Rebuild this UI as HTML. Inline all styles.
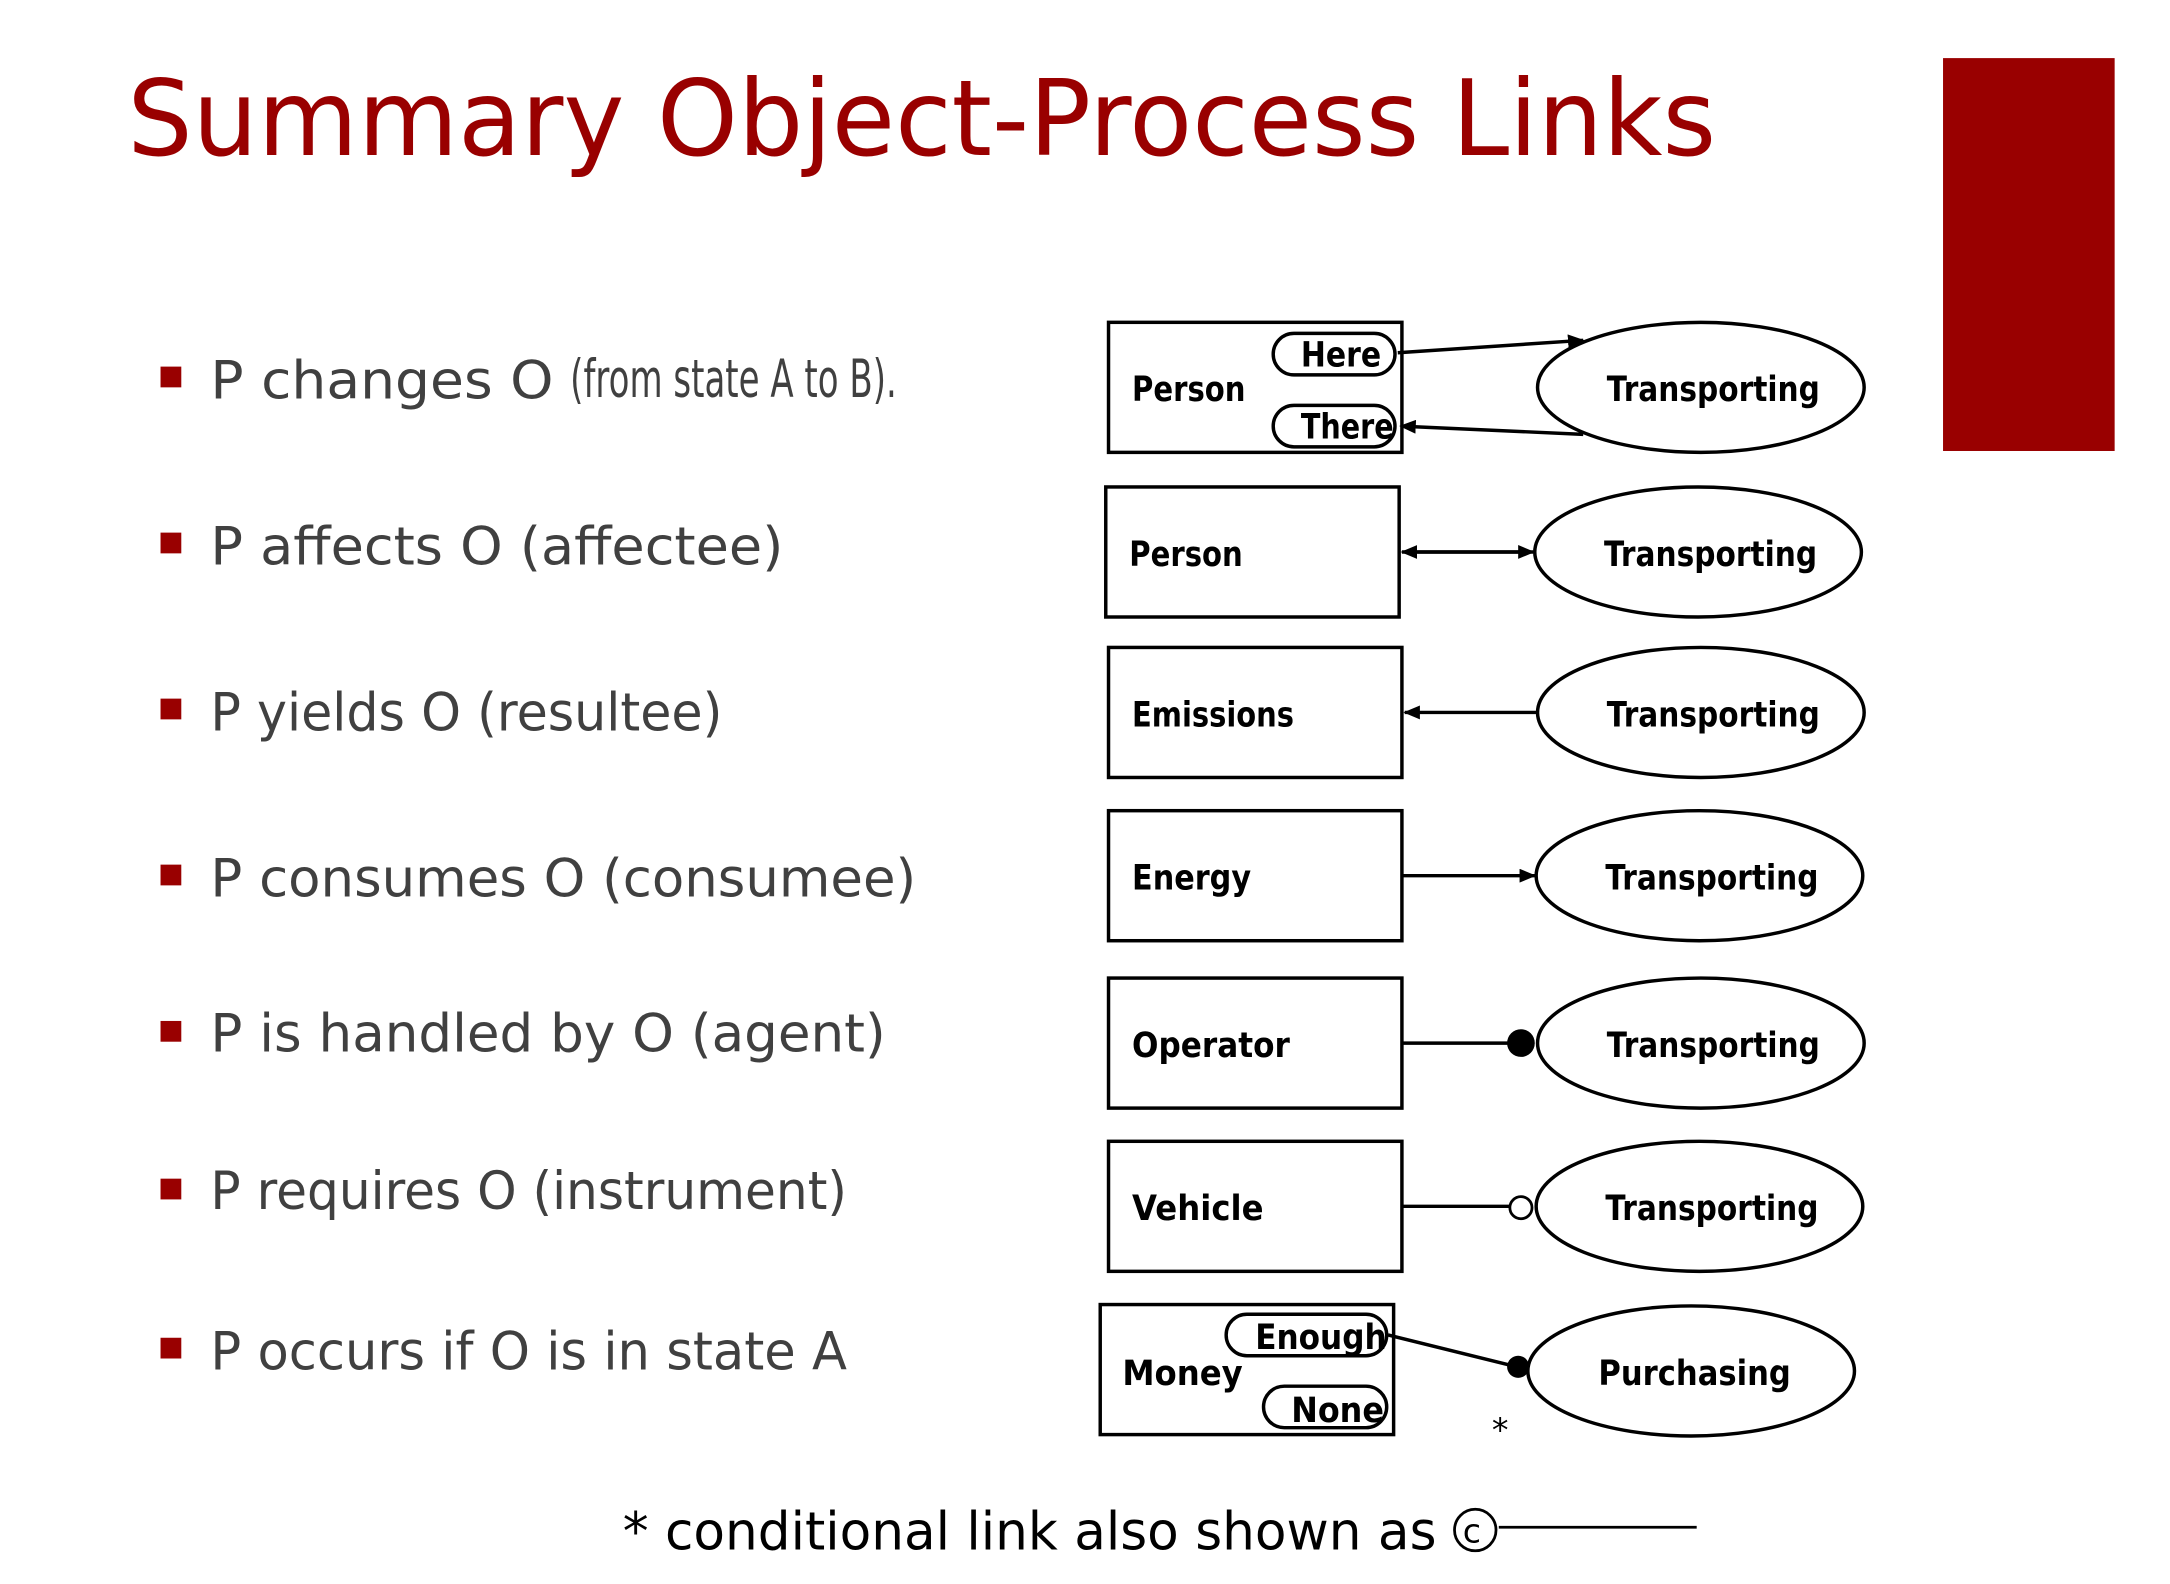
<!DOCTYPE html>
<html><head><meta charset="utf-8"><style>
html,body{margin:0;padding:0;background:#fff;}
svg{display:block;}
.b{font-family:"DejaVu Sans","Liberation Sans",sans-serif;font-weight:bold;font-size:25px;fill:#000;}
.t{font-family:"DejaVu Sans","Liberation Sans",sans-serif;font-size:38px;fill:#404040;}
</style></head><body>
<svg width="2170" height="1584" viewBox="0 0 1568 1145" preserveAspectRatio="none" xmlns="http://www.w3.org/2000/svg">
<defs>
<marker id="a" markerWidth="12" markerHeight="10" refX="11" refY="5" orient="auto" markerUnits="userSpaceOnUse"><path d="M0,0 L12,5 L0,10 z" fill="#000"/></marker>
</defs>
<rect x="1404" y="42" width="124" height="284" fill="#990000"/>
<text x="92" y="112" font-family="'DejaVu Sans','Liberation Sans',sans-serif" font-size="76" fill="#990000" textLength="1148" lengthAdjust="spacingAndGlyphs">Summary Object-Process Links</text>

<g fill="#990000">
<rect x="116" y="265" width="15" height="15"/>
<rect x="116" y="385" width="15" height="15"/>
<rect x="116" y="505" width="15" height="15"/>
<rect x="116" y="625" width="15" height="15"/>
<rect x="116" y="738" width="15" height="15"/>
<rect x="116" y="852" width="15" height="15"/>
<rect x="116" y="967" width="15" height="15"/>
</g>
<text class="t" x="152" y="288" textLength="248" lengthAdjust="spacingAndGlyphs">P changes O</text>
<text class="t" x="412" y="287" font-size="26" textLength="236" lengthAdjust="spacingAndGlyphs">(from state A to B).</text>
<text class="t" x="152" y="408" textLength="414" lengthAdjust="spacingAndGlyphs">P affects O (affectee)</text>
<text class="t" x="152" y="528" textLength="370" lengthAdjust="spacingAndGlyphs">P yields O (resultee)</text>
<text class="t" x="152" y="648" textLength="510" lengthAdjust="spacingAndGlyphs">P consumes O (consumee)</text>
<text class="t" x="152" y="760" textLength="488" lengthAdjust="spacingAndGlyphs">P is handled by O (agent)</text>
<text class="t" x="152" y="874" textLength="460" lengthAdjust="spacingAndGlyphs">P requires O (instrument)</text>
<text class="t" x="152" y="990" textLength="460" lengthAdjust="spacingAndGlyphs">P occurs if O is in state A</text>

<g fill="none" stroke="#000" stroke-width="2.5">
<rect x="801" y="233" width="212" height="94"/>
<rect x="920" y="241" width="88" height="30" rx="15"/>
<rect x="920" y="293" width="88" height="30" rx="15"/>
<ellipse cx="1229" cy="280" rx="118" ry="47"/>
<line x1="1010" y1="255" x2="1144" y2="246" marker-end="url(#a)"/>
<line x1="1144" y1="314" x2="1012" y2="308" marker-end="url(#a)"/>

<rect x="799" y="352" width="212" height="94"/>
<ellipse cx="1227" cy="399" rx="118" ry="47"/>
<line x1="1024" y1="399" x2="1108" y2="399" marker-end="url(#a)"/>
<line x1="1100" y1="399" x2="1013" y2="399" marker-end="url(#a)"/>

<rect x="801" y="468" width="212" height="94"/>
<ellipse cx="1229" cy="515" rx="118" ry="47"/>
<line x1="1110" y1="515" x2="1015" y2="515" marker-end="url(#a)"/>

<rect x="801" y="586" width="212" height="94"/>
<ellipse cx="1228" cy="633" rx="118" ry="47"/>
<line x1="1013" y1="633" x2="1109" y2="633" marker-end="url(#a)"/>

<rect x="801" y="707" width="212" height="94"/>
<ellipse cx="1229" cy="754" rx="118" ry="47"/>
<line x1="1013" y1="754" x2="1092" y2="754"/>

<rect x="801" y="825" width="212" height="94"/>
<ellipse cx="1228" cy="872" rx="118" ry="47"/>
<line x1="1013" y1="872" x2="1091" y2="872"/>
<circle cx="1099" cy="873" r="8" fill="#fff" stroke-width="2"/>

<rect x="795" y="943" width="212" height="94"/>
<rect x="886" y="950" width="116" height="30" rx="15"/>
<rect x="913" y="1002" width="89" height="30" rx="15"/>
<ellipse cx="1222" cy="991" rx="118" ry="47"/>
<line x1="1003" y1="965" x2="1096" y2="988"/>
<line x1="1083" y1="1104" x2="1226" y2="1104" stroke-width="2"/>
<circle cx="1066" cy="1106" r="15" stroke-width="2"/>
</g>
<circle cx="1099" cy="754" r="10" fill="#000"/>
<circle cx="1097" cy="988" r="8" fill="#000"/>

<g lengthAdjust="spacingAndGlyphs">
<text class="b" x="818" y="290" textLength="82" lengthAdjust="spacingAndGlyphs">Person</text>
<text class="b" x="940" y="265" textLength="58" lengthAdjust="spacingAndGlyphs">Here</text>
<text class="b" x="940" y="317" textLength="67" lengthAdjust="spacingAndGlyphs">There</text>
<text class="b" x="1161" y="290" textLength="154" lengthAdjust="spacingAndGlyphs">Transporting</text>
<text class="b" x="816" y="409" textLength="82" lengthAdjust="spacingAndGlyphs">Person</text>
<text class="b" x="1159" y="409" textLength="154" lengthAdjust="spacingAndGlyphs">Transporting</text>
<text class="b" x="818" y="525" textLength="117" lengthAdjust="spacingAndGlyphs">Emissions</text>
<text class="b" x="1161" y="525" textLength="154" lengthAdjust="spacingAndGlyphs">Transporting</text>
<text class="b" x="818" y="643" textLength="86" lengthAdjust="spacingAndGlyphs">Energy</text>
<text class="b" x="1160" y="643" textLength="154" lengthAdjust="spacingAndGlyphs">Transporting</text>
<text class="b" x="818" y="764" textLength="114" lengthAdjust="spacingAndGlyphs">Operator</text>
<text class="b" x="1161" y="764" textLength="154" lengthAdjust="spacingAndGlyphs">Transporting</text>
<text class="b" x="818" y="882" textLength="95" lengthAdjust="spacingAndGlyphs">Vehicle</text>
<text class="b" x="1160" y="882" textLength="154" lengthAdjust="spacingAndGlyphs">Transporting</text>
<text class="b" x="811" y="1001" textLength="87" lengthAdjust="spacingAndGlyphs">Money</text>
<text class="b" x="907" y="975" textLength="95" lengthAdjust="spacingAndGlyphs">Enough</text>
<text class="b" x="933" y="1028" textLength="67" lengthAdjust="spacingAndGlyphs">None</text>
<text class="b" x="1155" y="1001" textLength="139" lengthAdjust="spacingAndGlyphs">Purchasing</text>
</g>
<text x="1078" y="1042" font-family="'DejaVu Sans',sans-serif" font-size="24" fill="#000">*</text>
<text x="450" y="1120" font-family="'DejaVu Sans','Liberation Sans',sans-serif" font-size="38" fill="#000" textLength="588" lengthAdjust="spacingAndGlyphs">* conditional link also shown as</text>
<text x="1057" y="1115" font-family="'DejaVu Sans',sans-serif" font-size="24" fill="#000">c</text>
</svg>
</body></html>
